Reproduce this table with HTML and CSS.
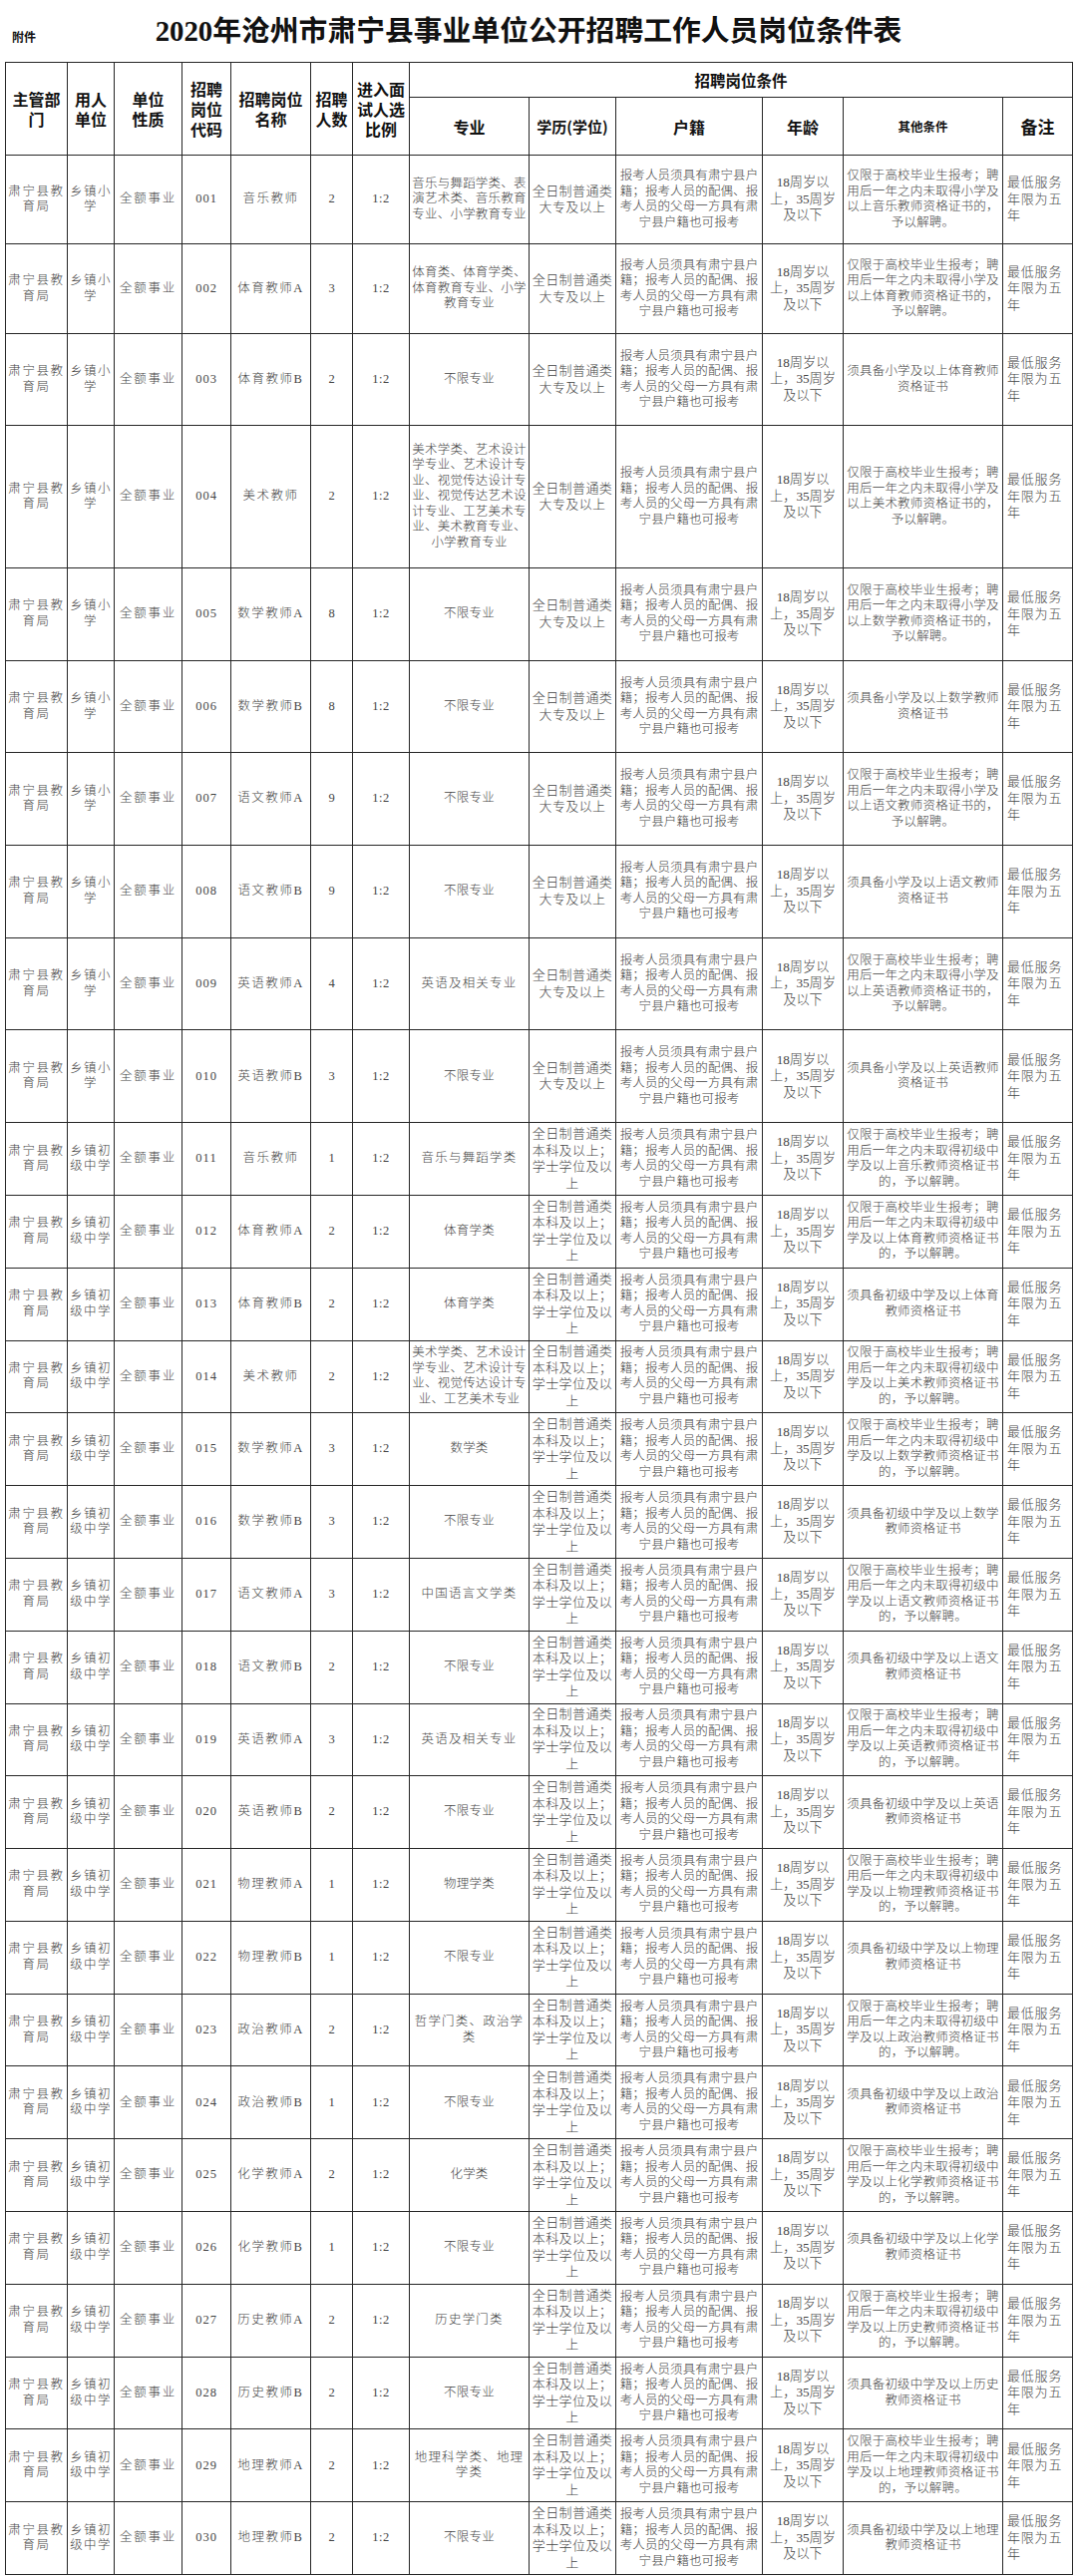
FILE: index.html
```html
<!DOCTYPE html>
<html lang="zh-CN">
<head>
<meta charset="utf-8">
<title>2020年沧州市肃宁县事业单位公开招聘工作人员岗位条件表</title>
<link rel="stylesheet" href="styles.css">
</head>
<body>
<div class="top">
  <div class="fujian">附件</div>
  <h1 class="title">2020年沧州市肃宁县事业单位公开招聘工作人员岗位条件表</h1>
  <div></div>
</div>
<table class="grid">
  <colgroup>
    <col class="w1"><col class="w2"><col class="w3"><col class="w4"><col class="w5"><col class="w6"><col class="w7"><col class="w8"><col class="w9"><col class="w10"><col class="w11"><col class="w12"><col class="w13">
  </colgroup>
  <thead>
    <tr class="h1">
      <th rowspan="2">主管部<br>门</th>
      <th rowspan="2">用人<br>单位</th>
      <th rowspan="2">单位<br>性质</th>
      <th rowspan="2">招聘<br>岗位<br>代码</th>
      <th rowspan="2">招聘岗位<br>名称</th>
      <th rowspan="2">招聘<br>人数</th>
      <th rowspan="2">进入面<br>试人选<br>比例</th>
      <th colspan="6" class="cond">招聘岗位条件</th>
    </tr>
    <tr class="h2">
      <th>专业</th>
      <th class="xl">学历(学位)</th>
      <th>户籍</th>
      <th>年龄</th>
      <th class="sm">其他条件</th>
      <th class="bz">备注</th>
    </tr>
  </thead>
  <tbody>
    <tr class="r-a"><td class="dept">肃宁县教<br>育局</td><td class="unit">乡镇小<br>学</td><td class="type">全额事业</td><td class="code">001</td><td class="name">音乐教师</td><td class="num">2</td><td class="ratio">1:2</td><td class="major">音乐与舞蹈学类、表<br>演艺术类、音乐教育<br>专业、小学教育专业</td><td class="edu">全日制普通类<br>大专及以上</td><td class="huji">报考人员须具有肃宁县户<br>籍；报考人员的配偶、报<br>考人员的父母一方具有肃<br>宁县户籍也可报考</td><td class="age">18周岁以<br>上，35周岁<br>及以下</td><td class="other">仅限于高校毕业生报考；聘<br>用后一年之内未取得小学及<br>以上音乐教师资格证书的，<br>予以解聘。</td><td class="note">最低服务<br>年限为五<br>年</td></tr>
    <tr class="r-b"><td class="dept">肃宁县教<br>育局</td><td class="unit">乡镇小<br>学</td><td class="type">全额事业</td><td class="code">002</td><td class="name">体育教师A</td><td class="num">3</td><td class="ratio">1:2</td><td class="major">体育类、体育学类、<br>体育教育专业、小学<br>教育专业</td><td class="edu">全日制普通类<br>大专及以上</td><td class="huji">报考人员须具有肃宁县户<br>籍；报考人员的配偶、报<br>考人员的父母一方具有肃<br>宁县户籍也可报考</td><td class="age">18周岁以<br>上，35周岁<br>及以下</td><td class="other">仅限于高校毕业生报考；聘<br>用后一年之内未取得小学及<br>以上体育教师资格证书的，<br>予以解聘。</td><td class="note">最低服务<br>年限为五<br>年</td></tr>
    <tr class="r-c"><td class="dept">肃宁县教<br>育局</td><td class="unit">乡镇小<br>学</td><td class="type">全额事业</td><td class="code">003</td><td class="name">体育教师B</td><td class="num">2</td><td class="ratio">1:2</td><td class="major">不限专业</td><td class="edu">全日制普通类<br>大专及以上</td><td class="huji">报考人员须具有肃宁县户<br>籍；报考人员的配偶、报<br>考人员的父母一方具有肃<br>宁县户籍也可报考</td><td class="age">18周岁以<br>上，35周岁<br>及以下</td><td class="other">须具备小学及以上体育教师<br>资格证书</td><td class="note">最低服务<br>年限为五<br>年</td></tr>
    <tr class="r-tall"><td class="dept">肃宁县教<br>育局</td><td class="unit">乡镇小<br>学</td><td class="type">全额事业</td><td class="code">004</td><td class="name">美术教师</td><td class="num">2</td><td class="ratio">1:2</td><td class="major">美术学类、艺术设计<br>学专业、艺术设计专<br>业、视觉传达设计专<br>业、视觉传达艺术设<br>计专业、工艺美术专<br>业、美术教育专业、<br>小学教育专业</td><td class="edu">全日制普通类<br>大专及以上</td><td class="huji">报考人员须具有肃宁县户<br>籍；报考人员的配偶、报<br>考人员的父母一方具有肃<br>宁县户籍也可报考</td><td class="age">18周岁以<br>上，35周岁<br>及以下</td><td class="other">仅限于高校毕业生报考；聘<br>用后一年之内未取得小学及<br>以上美术教师资格证书的，<br>予以解聘。</td><td class="note">最低服务<br>年限为五<br>年</td></tr>
    <tr class="r-m"><td class="dept">肃宁县教<br>育局</td><td class="unit">乡镇小<br>学</td><td class="type">全额事业</td><td class="code">005</td><td class="name">数学教师A</td><td class="num">8</td><td class="ratio">1:2</td><td class="major">不限专业</td><td class="edu">全日制普通类<br>大专及以上</td><td class="huji">报考人员须具有肃宁县户<br>籍；报考人员的配偶、报<br>考人员的父母一方具有肃<br>宁县户籍也可报考</td><td class="age">18周岁以<br>上，35周岁<br>及以下</td><td class="other">仅限于高校毕业生报考；聘<br>用后一年之内未取得小学及<br>以上数学教师资格证书的，<br>予以解聘。</td><td class="note">最低服务<br>年限为五<br>年</td></tr>
    <tr class="r-m"><td class="dept">肃宁县教<br>育局</td><td class="unit">乡镇小<br>学</td><td class="type">全额事业</td><td class="code">006</td><td class="name">数学教师B</td><td class="num">8</td><td class="ratio">1:2</td><td class="major">不限专业</td><td class="edu">全日制普通类<br>大专及以上</td><td class="huji">报考人员须具有肃宁县户<br>籍；报考人员的配偶、报<br>考人员的父母一方具有肃<br>宁县户籍也可报考</td><td class="age">18周岁以<br>上，35周岁<br>及以下</td><td class="other">须具备小学及以上数学教师<br>资格证书</td><td class="note">最低服务<br>年限为五<br>年</td></tr>
    <tr class="r-m"><td class="dept">肃宁县教<br>育局</td><td class="unit">乡镇小<br>学</td><td class="type">全额事业</td><td class="code">007</td><td class="name">语文教师A</td><td class="num">9</td><td class="ratio">1:2</td><td class="major">不限专业</td><td class="edu">全日制普通类<br>大专及以上</td><td class="huji">报考人员须具有肃宁县户<br>籍；报考人员的配偶、报<br>考人员的父母一方具有肃<br>宁县户籍也可报考</td><td class="age">18周岁以<br>上，35周岁<br>及以下</td><td class="other">仅限于高校毕业生报考；聘<br>用后一年之内未取得小学及<br>以上语文教师资格证书的，<br>予以解聘。</td><td class="note">最低服务<br>年限为五<br>年</td></tr>
    <tr class="r-m"><td class="dept">肃宁县教<br>育局</td><td class="unit">乡镇小<br>学</td><td class="type">全额事业</td><td class="code">008</td><td class="name">语文教师B</td><td class="num">9</td><td class="ratio">1:2</td><td class="major">不限专业</td><td class="edu">全日制普通类<br>大专及以上</td><td class="huji">报考人员须具有肃宁县户<br>籍；报考人员的配偶、报<br>考人员的父母一方具有肃<br>宁县户籍也可报考</td><td class="age">18周岁以<br>上，35周岁<br>及以下</td><td class="other">须具备小学及以上语文教师<br>资格证书</td><td class="note">最低服务<br>年限为五<br>年</td></tr>
    <tr class="r-m"><td class="dept">肃宁县教<br>育局</td><td class="unit">乡镇小<br>学</td><td class="type">全额事业</td><td class="code">009</td><td class="name">英语教师A</td><td class="num">4</td><td class="ratio">1:2</td><td class="major wide">英语及相关专业</td><td class="edu">全日制普通类<br>大专及以上</td><td class="huji">报考人员须具有肃宁县户<br>籍；报考人员的配偶、报<br>考人员的父母一方具有肃<br>宁县户籍也可报考</td><td class="age">18周岁以<br>上，35周岁<br>及以下</td><td class="other">仅限于高校毕业生报考；聘<br>用后一年之内未取得小学及<br>以上英语教师资格证书的，<br>予以解聘。</td><td class="note">最低服务<br>年限为五<br>年</td></tr>
    <tr class="r-m"><td class="dept">肃宁县教<br>育局</td><td class="unit">乡镇小<br>学</td><td class="type">全额事业</td><td class="code">010</td><td class="name">英语教师B</td><td class="num">3</td><td class="ratio">1:2</td><td class="major">不限专业</td><td class="edu">全日制普通类<br>大专及以上</td><td class="huji">报考人员须具有肃宁县户<br>籍；报考人员的配偶、报<br>考人员的父母一方具有肃<br>宁县户籍也可报考</td><td class="age">18周岁以<br>上，35周岁<br>及以下</td><td class="other">须具备小学及以上英语教师<br>资格证书</td><td class="note">最低服务<br>年限为五<br>年</td></tr>

    <tr class="r-s"><td class="dept">肃宁县教<br>育局</td><td class="unit">乡镇初<br>级中学</td><td class="type">全额事业</td><td class="code">011</td><td class="name">音乐教师</td><td class="num">1</td><td class="ratio">1:2</td><td class="major wide">音乐与舞蹈学类</td><td class="edu">全日制普通类<br>本科及以上；<br>学士学位及以<br>上</td><td class="huji">报考人员须具有肃宁县户<br>籍；报考人员的配偶、报<br>考人员的父母一方具有肃<br>宁县户籍也可报考</td><td class="age">18周岁以<br>上，35周岁<br>及以下</td><td class="other">仅限于高校毕业生报考；聘<br>用后一年之内未取得初级中<br>学及以上音乐教师资格证书<br>的，予以解聘。</td><td class="note">最低服务<br>年限为五<br>年</td></tr>
    <tr class="r-s"><td class="dept">肃宁县教<br>育局</td><td class="unit">乡镇初<br>级中学</td><td class="type">全额事业</td><td class="code">012</td><td class="name">体育教师A</td><td class="num">2</td><td class="ratio">1:2</td><td class="major">体育学类</td><td class="edu">全日制普通类<br>本科及以上；<br>学士学位及以<br>上</td><td class="huji">报考人员须具有肃宁县户<br>籍；报考人员的配偶、报<br>考人员的父母一方具有肃<br>宁县户籍也可报考</td><td class="age">18周岁以<br>上，35周岁<br>及以下</td><td class="other">仅限于高校毕业生报考；聘<br>用后一年之内未取得初级中<br>学及以上体育教师资格证书<br>的，予以解聘。</td><td class="note">最低服务<br>年限为五<br>年</td></tr>
    <tr class="r-s"><td class="dept">肃宁县教<br>育局</td><td class="unit">乡镇初<br>级中学</td><td class="type">全额事业</td><td class="code">013</td><td class="name">体育教师B</td><td class="num">2</td><td class="ratio">1:2</td><td class="major">体育学类</td><td class="edu">全日制普通类<br>本科及以上；<br>学士学位及以<br>上</td><td class="huji">报考人员须具有肃宁县户<br>籍；报考人员的配偶、报<br>考人员的父母一方具有肃<br>宁县户籍也可报考</td><td class="age">18周岁以<br>上，35周岁<br>及以下</td><td class="other">须具备初级中学及以上体育<br>教师资格证书</td><td class="note">最低服务<br>年限为五<br>年</td></tr>
    <tr class="r-s"><td class="dept">肃宁县教<br>育局</td><td class="unit">乡镇初<br>级中学</td><td class="type">全额事业</td><td class="code">014</td><td class="name">美术教师</td><td class="num">2</td><td class="ratio">1:2</td><td class="major">美术学类、艺术设计<br>学专业、艺术设计专<br>业、视觉传达设计专<br>业、工艺美术专业</td><td class="edu">全日制普通类<br>本科及以上；<br>学士学位及以<br>上</td><td class="huji">报考人员须具有肃宁县户<br>籍；报考人员的配偶、报<br>考人员的父母一方具有肃<br>宁县户籍也可报考</td><td class="age">18周岁以<br>上，35周岁<br>及以下</td><td class="other">仅限于高校毕业生报考；聘<br>用后一年之内未取得初级中<br>学及以上美术教师资格证书<br>的，予以解聘。</td><td class="note">最低服务<br>年限为五<br>年</td></tr>
    <tr class="r-s"><td class="dept">肃宁县教<br>育局</td><td class="unit">乡镇初<br>级中学</td><td class="type">全额事业</td><td class="code">015</td><td class="name">数学教师A</td><td class="num">3</td><td class="ratio">1:2</td><td class="major">数学类</td><td class="edu">全日制普通类<br>本科及以上；<br>学士学位及以<br>上</td><td class="huji">报考人员须具有肃宁县户<br>籍；报考人员的配偶、报<br>考人员的父母一方具有肃<br>宁县户籍也可报考</td><td class="age">18周岁以<br>上，35周岁<br>及以下</td><td class="other">仅限于高校毕业生报考；聘<br>用后一年之内未取得初级中<br>学及以上数学教师资格证书<br>的，予以解聘。</td><td class="note">最低服务<br>年限为五<br>年</td></tr>
    <tr class="r-s"><td class="dept">肃宁县教<br>育局</td><td class="unit">乡镇初<br>级中学</td><td class="type">全额事业</td><td class="code">016</td><td class="name">数学教师B</td><td class="num">3</td><td class="ratio">1:2</td><td class="major">不限专业</td><td class="edu">全日制普通类<br>本科及以上；<br>学士学位及以<br>上</td><td class="huji">报考人员须具有肃宁县户<br>籍；报考人员的配偶、报<br>考人员的父母一方具有肃<br>宁县户籍也可报考</td><td class="age">18周岁以<br>上，35周岁<br>及以下</td><td class="other">须具备初级中学及以上数学<br>教师资格证书</td><td class="note">最低服务<br>年限为五<br>年</td></tr>
    <tr class="r-s"><td class="dept">肃宁县教<br>育局</td><td class="unit">乡镇初<br>级中学</td><td class="type">全额事业</td><td class="code">017</td><td class="name">语文教师A</td><td class="num">3</td><td class="ratio">1:2</td><td class="major wide">中国语言文学类</td><td class="edu">全日制普通类<br>本科及以上；<br>学士学位及以<br>上</td><td class="huji">报考人员须具有肃宁县户<br>籍；报考人员的配偶、报<br>考人员的父母一方具有肃<br>宁县户籍也可报考</td><td class="age">18周岁以<br>上，35周岁<br>及以下</td><td class="other">仅限于高校毕业生报考；聘<br>用后一年之内未取得初级中<br>学及以上语文教师资格证书<br>的，予以解聘。</td><td class="note">最低服务<br>年限为五<br>年</td></tr>
    <tr class="r-s"><td class="dept">肃宁县教<br>育局</td><td class="unit">乡镇初<br>级中学</td><td class="type">全额事业</td><td class="code">018</td><td class="name">语文教师B</td><td class="num">2</td><td class="ratio">1:2</td><td class="major">不限专业</td><td class="edu">全日制普通类<br>本科及以上；<br>学士学位及以<br>上</td><td class="huji">报考人员须具有肃宁县户<br>籍；报考人员的配偶、报<br>考人员的父母一方具有肃<br>宁县户籍也可报考</td><td class="age">18周岁以<br>上，35周岁<br>及以下</td><td class="other">须具备初级中学及以上语文<br>教师资格证书</td><td class="note">最低服务<br>年限为五<br>年</td></tr>
    <tr class="r-s"><td class="dept">肃宁县教<br>育局</td><td class="unit">乡镇初<br>级中学</td><td class="type">全额事业</td><td class="code">019</td><td class="name">英语教师A</td><td class="num">3</td><td class="ratio">1:2</td><td class="major wide">英语及相关专业</td><td class="edu">全日制普通类<br>本科及以上；<br>学士学位及以<br>上</td><td class="huji">报考人员须具有肃宁县户<br>籍；报考人员的配偶、报<br>考人员的父母一方具有肃<br>宁县户籍也可报考</td><td class="age">18周岁以<br>上，35周岁<br>及以下</td><td class="other">仅限于高校毕业生报考；聘<br>用后一年之内未取得初级中<br>学及以上英语教师资格证书<br>的，予以解聘。</td><td class="note">最低服务<br>年限为五<br>年</td></tr>
    <tr class="r-s"><td class="dept">肃宁县教<br>育局</td><td class="unit">乡镇初<br>级中学</td><td class="type">全额事业</td><td class="code">020</td><td class="name">英语教师B</td><td class="num">2</td><td class="ratio">1:2</td><td class="major">不限专业</td><td class="edu">全日制普通类<br>本科及以上；<br>学士学位及以<br>上</td><td class="huji">报考人员须具有肃宁县户<br>籍；报考人员的配偶、报<br>考人员的父母一方具有肃<br>宁县户籍也可报考</td><td class="age">18周岁以<br>上，35周岁<br>及以下</td><td class="other">须具备初级中学及以上英语<br>教师资格证书</td><td class="note">最低服务<br>年限为五<br>年</td></tr>
    <tr class="r-s"><td class="dept">肃宁县教<br>育局</td><td class="unit">乡镇初<br>级中学</td><td class="type">全额事业</td><td class="code">021</td><td class="name">物理教师A</td><td class="num">1</td><td class="ratio">1:2</td><td class="major">物理学类</td><td class="edu">全日制普通类<br>本科及以上；<br>学士学位及以<br>上</td><td class="huji">报考人员须具有肃宁县户<br>籍；报考人员的配偶、报<br>考人员的父母一方具有肃<br>宁县户籍也可报考</td><td class="age">18周岁以<br>上，35周岁<br>及以下</td><td class="other">仅限于高校毕业生报考；聘<br>用后一年之内未取得初级中<br>学及以上物理教师资格证书<br>的，予以解聘。</td><td class="note">最低服务<br>年限为五<br>年</td></tr>
    <tr class="r-s"><td class="dept">肃宁县教<br>育局</td><td class="unit">乡镇初<br>级中学</td><td class="type">全额事业</td><td class="code">022</td><td class="name">物理教师B</td><td class="num">1</td><td class="ratio">1:2</td><td class="major">不限专业</td><td class="edu">全日制普通类<br>本科及以上；<br>学士学位及以<br>上</td><td class="huji">报考人员须具有肃宁县户<br>籍；报考人员的配偶、报<br>考人员的父母一方具有肃<br>宁县户籍也可报考</td><td class="age">18周岁以<br>上，35周岁<br>及以下</td><td class="other">须具备初级中学及以上物理<br>教师资格证书</td><td class="note">最低服务<br>年限为五<br>年</td></tr>
    <tr class="r-s"><td class="dept">肃宁县教<br>育局</td><td class="unit">乡镇初<br>级中学</td><td class="type">全额事业</td><td class="code">023</td><td class="name">政治教师A</td><td class="num">2</td><td class="ratio">1:2</td><td class="major wide">哲学门类、政治学<br>类</td><td class="edu">全日制普通类<br>本科及以上；<br>学士学位及以<br>上</td><td class="huji">报考人员须具有肃宁县户<br>籍；报考人员的配偶、报<br>考人员的父母一方具有肃<br>宁县户籍也可报考</td><td class="age">18周岁以<br>上，35周岁<br>及以下</td><td class="other">仅限于高校毕业生报考；聘<br>用后一年之内未取得初级中<br>学及以上政治教师资格证书<br>的，予以解聘。</td><td class="note">最低服务<br>年限为五<br>年</td></tr>
    <tr class="r-s"><td class="dept">肃宁县教<br>育局</td><td class="unit">乡镇初<br>级中学</td><td class="type">全额事业</td><td class="code">024</td><td class="name">政治教师B</td><td class="num">1</td><td class="ratio">1:2</td><td class="major">不限专业</td><td class="edu">全日制普通类<br>本科及以上；<br>学士学位及以<br>上</td><td class="huji">报考人员须具有肃宁县户<br>籍；报考人员的配偶、报<br>考人员的父母一方具有肃<br>宁县户籍也可报考</td><td class="age">18周岁以<br>上，35周岁<br>及以下</td><td class="other">须具备初级中学及以上政治<br>教师资格证书</td><td class="note">最低服务<br>年限为五<br>年</td></tr>
    <tr class="r-s"><td class="dept">肃宁县教<br>育局</td><td class="unit">乡镇初<br>级中学</td><td class="type">全额事业</td><td class="code">025</td><td class="name">化学教师A</td><td class="num">2</td><td class="ratio">1:2</td><td class="major">化学类</td><td class="edu">全日制普通类<br>本科及以上；<br>学士学位及以<br>上</td><td class="huji">报考人员须具有肃宁县户<br>籍；报考人员的配偶、报<br>考人员的父母一方具有肃<br>宁县户籍也可报考</td><td class="age">18周岁以<br>上，35周岁<br>及以下</td><td class="other">仅限于高校毕业生报考；聘<br>用后一年之内未取得初级中<br>学及以上化学教师资格证书<br>的，予以解聘。</td><td class="note">最低服务<br>年限为五<br>年</td></tr>
    <tr class="r-s"><td class="dept">肃宁县教<br>育局</td><td class="unit">乡镇初<br>级中学</td><td class="type">全额事业</td><td class="code">026</td><td class="name">化学教师B</td><td class="num">1</td><td class="ratio">1:2</td><td class="major">不限专业</td><td class="edu">全日制普通类<br>本科及以上；<br>学士学位及以<br>上</td><td class="huji">报考人员须具有肃宁县户<br>籍；报考人员的配偶、报<br>考人员的父母一方具有肃<br>宁县户籍也可报考</td><td class="age">18周岁以<br>上，35周岁<br>及以下</td><td class="other">须具备初级中学及以上化学<br>教师资格证书</td><td class="note">最低服务<br>年限为五<br>年</td></tr>
    <tr class="r-s"><td class="dept">肃宁县教<br>育局</td><td class="unit">乡镇初<br>级中学</td><td class="type">全额事业</td><td class="code">027</td><td class="name">历史教师A</td><td class="num">2</td><td class="ratio">1:2</td><td class="major wide">历史学门类</td><td class="edu">全日制普通类<br>本科及以上；<br>学士学位及以<br>上</td><td class="huji">报考人员须具有肃宁县户<br>籍；报考人员的配偶、报<br>考人员的父母一方具有肃<br>宁县户籍也可报考</td><td class="age">18周岁以<br>上，35周岁<br>及以下</td><td class="other">仅限于高校毕业生报考；聘<br>用后一年之内未取得初级中<br>学及以上历史教师资格证书<br>的，予以解聘。</td><td class="note">最低服务<br>年限为五<br>年</td></tr>
    <tr class="r-s"><td class="dept">肃宁县教<br>育局</td><td class="unit">乡镇初<br>级中学</td><td class="type">全额事业</td><td class="code">028</td><td class="name">历史教师B</td><td class="num">2</td><td class="ratio">1:2</td><td class="major">不限专业</td><td class="edu">全日制普通类<br>本科及以上；<br>学士学位及以<br>上</td><td class="huji">报考人员须具有肃宁县户<br>籍；报考人员的配偶、报<br>考人员的父母一方具有肃<br>宁县户籍也可报考</td><td class="age">18周岁以<br>上，35周岁<br>及以下</td><td class="other">须具备初级中学及以上历史<br>教师资格证书</td><td class="note">最低服务<br>年限为五<br>年</td></tr>
    <tr class="r-s"><td class="dept">肃宁县教<br>育局</td><td class="unit">乡镇初<br>级中学</td><td class="type">全额事业</td><td class="code">029</td><td class="name">地理教师A</td><td class="num">2</td><td class="ratio">1:2</td><td class="major wide">地理科学类、地理<br>学类</td><td class="edu">全日制普通类<br>本科及以上；<br>学士学位及以<br>上</td><td class="huji">报考人员须具有肃宁县户<br>籍；报考人员的配偶、报<br>考人员的父母一方具有肃<br>宁县户籍也可报考</td><td class="age">18周岁以<br>上，35周岁<br>及以下</td><td class="other">仅限于高校毕业生报考；聘<br>用后一年之内未取得初级中<br>学及以上地理教师资格证书<br>的，予以解聘。</td><td class="note">最低服务<br>年限为五<br>年</td></tr>
    <tr class="r-s"><td class="dept">肃宁县教<br>育局</td><td class="unit">乡镇初<br>级中学</td><td class="type">全额事业</td><td class="code">030</td><td class="name">地理教师B</td><td class="num">2</td><td class="ratio">1:2</td><td class="major">不限专业</td><td class="edu">全日制普通类<br>本科及以上；<br>学士学位及以<br>上</td><td class="huji">报考人员须具有肃宁县户<br>籍；报考人员的配偶、报<br>考人员的父母一方具有肃<br>宁县户籍也可报考</td><td class="age">18周岁以<br>上，35周岁<br>及以下</td><td class="other">须具备初级中学及以上地理<br>教师资格证书</td><td class="note">最低服务<br>年限为五<br>年</td></tr>
  </tbody>
</table>
</body>
</html>
```

FILE: styles.css
```css
html, body {
  margin: 0;
  padding: 0;
  background: #ffffff;
}

body {
  font-family: "Liberation Serif", "Noto Sans CJK SC", serif;
  color: #444;
}

.top {
  height: 62px;
  display: grid;
  grid-template-columns: 1fr auto 1fr;
  align-items: center;
}

.fujian {
  font-family: "Noto Sans CJK SC", sans-serif;
  font-weight: 700;
  font-size: 12px;
  line-height: 14px;
  color: #111;
  padding-left: 12px;
  padding-top: 12px;
}

.title {
  margin: 0 20px 0 0;
  font-family: "Liberation Serif", "Noto Sans CJK SC", serif;
  font-weight: 700;
  font-size: 28.8px;
  line-height: 36px;
  color: #111;
}

.grid {
  border-collapse: collapse;
  table-layout: fixed;
  width: 1070px;
  margin-left: 5px;
}

.w1 { width: 62px; }
.w2 { width: 47px; }
.w3 { width: 68px; }
.w4 { width: 49px; }
.w5 { width: 80px; }
.w6 { width: 42px; }
.w7 { width: 57px; }
.w8 { width: 120px; }
.w9 { width: 87px; }
.w10 { width: 147px; }
.w11 { width: 81px; }
.w12 { width: 160px; }
.w13 { width: 70px; }

.grid th,
.grid td {
  border: 1px solid #262626;
  padding: 0 2px;
  text-align: center;
  vertical-align: middle;
  white-space: nowrap;
  overflow: hidden;
}

.grid th {
  font-family: "Noto Sans CJK SC", sans-serif;
  font-weight: 700;
  font-size: 16px;
  line-height: 20px;
  color: #111;
}

.grid th.cond { font-size: 15.5px; }
.grid th.xl { font-size: 15px; padding: 0; }
.grid th.sm { font-size: 12.5px; }
.grid th.bz { font-size: 17px; }

.h1 { height: 35px; }
.h2 { height: 58px; }

.r-a { height: 89px; }
.r-b { height: 90px; }
.r-c { height: 92px; }
.r-tall { height: 143px; }
.r-m { height: 92.7px; }
.r-s { height: 72.8px; }

.grid td {
  font-weight: 300;
  font-size: 12.5px;
  line-height: 15.5px;
  color: #444;
}

.dept { letter-spacing: 1.6px; line-height: 16px; }
.unit { letter-spacing: 1.4px; line-height: 16px; }
.type { letter-spacing: 1.8px; }
.code { letter-spacing: 1px; font-size: 13px; }
.name { letter-spacing: 1.5px; }
.num { font-size: 13px; }
.ratio { font-size: 13px; letter-spacing: 0.5px; }

.grid td.major { letter-spacing: 0.2px; }
.grid td.major.wide { letter-spacing: 1.2px; }
.grid td.edu { font-size: 13px; letter-spacing: 0.4px; line-height: 16.5px; }
.grid td.huji { letter-spacing: 0.1px; }
.grid td.age { font-size: 13.2px; line-height: 16.5px; }
.grid td.other { letter-spacing: 0.2px; }
.grid td.note {
  text-align: left;
  padding-left: 4px;
  font-size: 13px;
  letter-spacing: 0.8px;
  line-height: 16.5px;
}
```
